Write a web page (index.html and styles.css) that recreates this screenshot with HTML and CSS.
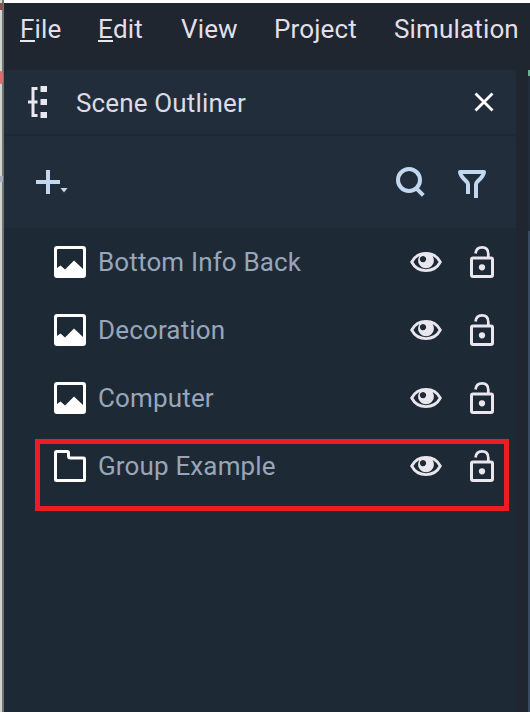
FILE: index.html
```html
<!DOCTYPE html>
<html lang="en">
<head>
<meta charset="utf-8">
<title>Scene Outliner</title>
<link rel="stylesheet" href="styles.css">
</head>
<body>
<svg class="symbols" aria-hidden="true">
  <symbol id="image" viewBox="0 0 32 32">
    <path fill="currentColor" fill-rule="evenodd" d="M3 0H29Q32 0 32 3V29Q32 32 29 32H3Q0 32 0 29V3Q0 0 3 0ZM4 3Q3 3 3 4V22L6.5 19.5L11 23.5L20 14.5L29 23V4Q29 3 28 3Z"/>
  </symbol>
  <symbol id="folder" viewBox="0 0 32 32">
    <path fill="none" stroke="currentColor" stroke-width="3" stroke-linejoin="round" d="M2.500 1.500H13Q14.500 1.500 14.500 3V6Q14.500 8 16.500 8H29.500Q30.500 8 30.500 9V29.500Q30.500 30.500 29.500 30.500H2.500Q1.500 30.500 1.500 29.500V2.500Q1.500 1.500 2.500 1.500Z"/>
  </symbol>
  <symbol id="eye" viewBox="0 0 32 20">
    <path fill="none" stroke="currentColor" stroke-width="2.800" d="M1.700 10C4.500 4.700 9.500 1.400 16 1.400S27.500 4.700 30.300 10C27.500 15.300 22.500 18.600 16 18.600S4.500 15.300 1.700 10Z"/>
    <path fill="currentColor" fill-rule="evenodd" d="M16 0.500A7.900 7.900 0 1 1 15.990 0.500ZM13 4A3.100 3.100 0 1 0 13.010 4Z"/>
  </symbol>
  <symbol id="lock" viewBox="0 0 24 32">
    <rect x="1.500" y="12" width="21" height="18.500" rx="1.500" fill="none" stroke="currentColor" stroke-width="3"/>
    <path fill="none" stroke="currentColor" stroke-width="2.700" d="M5.500 7.500C6 3.500 8.500 1.400 12 1.400C16 1.400 18.300 4 18.300 8V11"/>
    <circle cx="12" cy="21.300" r="3.100" fill="currentColor"/>
  </symbol>
</svg>
<div class="screen">
  <div class="backdrop"><i class="mark mark-top"></i><i class="mark mark-mid"></i><i class="mark mark-low"></i></div>
  <div class="window">
    <nav class="menu">
      <span class="file"><u>F</u>ile</span><span class="edit"><u>E</u>dit</span><span class="view">View</span><span class="project">Project</span><span class="simulation">Simulation</span>
    </nav>
    <div class="workspace">
      <section class="panel">
        <header class="titlebar">
          <svg class="tree" width="20" height="32" viewBox="0 0 20 32"><path fill="none" stroke="currentColor" stroke-width="3" d="M9.500 2.500H5V29.500H9.500M0 16H9.500"/><path fill="currentColor" d="M12.500 0H19V6H12.500ZM12.500 13H19V19H12.500ZM12.500 26H19V32H12.500Z"/></svg>
          <h1>Scene Outliner</h1>
          <svg class="close" width="20" height="20" viewBox="0 0 20 20"><path fill="none" stroke="currentColor" stroke-width="2.800" d="M1.500 1.500L18.500 18.500M18.500 1.500L1.500 18.500"/></svg>
        </header>
        <div class="toolbar">
          <svg class="add" width="32" height="24" viewBox="0 0 32 24"><path fill="none" stroke="currentColor" stroke-width="4" d="M12 0V24M0 12H24"/><path fill="currentColor" d="M24.500 18H31.500L28 22.500Z"/></svg>
          <svg class="search" width="30" height="30" viewBox="0 0 30 30"><circle cx="13" cy="13" r="11" fill="none" stroke="currentColor" stroke-width="4"/><path stroke="currentColor" stroke-width="4" d="M19.500 20.500L27.300 28.300"/></svg>
          <svg class="filter" width="28" height="28" viewBox="0 0 28 28"><path fill="none" stroke="currentColor" stroke-width="4" stroke-linejoin="round" d="M10 24V14.500Q10 13 8.500 11.500Q2 5.500 2 2H26Q26 5.500 19.500 11.500Q18 13 18 14.500V28"/></svg>
        </div>
        <ul class="list">
          <li><svg class="kind"><use href="#image"/></svg><span>Bottom Info Back</span><svg class="eye"><use href="#eye"/></svg><svg class="lock"><use href="#lock"/></svg></li>
          <li><svg class="kind"><use href="#image"/></svg><span>Decoration</span><svg class="eye"><use href="#eye"/></svg><svg class="lock"><use href="#lock"/></svg></li>
          <li><svg class="kind"><use href="#image"/></svg><span>Computer</span><svg class="eye"><use href="#eye"/></svg><svg class="lock"><use href="#lock"/></svg></li>
          <li class="marked"><svg class="kind"><use href="#folder"/></svg><span>Group Example</span><svg class="eye"><use href="#eye"/></svg><svg class="lock"><use href="#lock"/></svg></li>
        </ul>
      </section>
      <aside class="next-panel"></aside>
    </div>
  </div>
</div>
</body>
</html>
```

FILE: styles.css
```css
*, *::after { box-sizing: border-box; }
body { margin: 0; background: #fff; font-family: Roboto, sans-serif; font-size: 26px; line-height: 32px; letter-spacing: 0.15px; overflow: hidden; }
svg { display: block; flex: none; }
.symbols { position: absolute; width: 0; height: 0; }
.screen { display: flex; height: 712px; }
.backdrop { position: relative; flex: none; width: 4px; background: linear-gradient(90deg, #d1d5d2 2px, #727472 2px); }
.mark { position: absolute; left: 0; width: 3px; }
.mark-top { top: 3px; height: 7px; background: #865552; }
.mark-mid { top: 71px; height: 13px; background: #d5716f; border-radius: 0 3px 3px 0; }
.mark-low { top: 176px; height: 6px; background: #a4afbb; }
.window { flex: 1; display: flex; flex-direction: column; margin-top: 3px; background: #1f2630; min-width: 0; }
.menu { display: flex; height: 67px; padding: 10px 0 0 16px; color: #e2dfe9; white-space: nowrap; }
.menu span { flex: none; }
.menu u { display: inline-block; height: 29px; border-bottom: 2px solid #e9e7ef; text-decoration: none; }
.file { width: 78px; }
.edit { width: 83px; }
.view { width: 93px; }
.project { width: 120px; }
.workspace { flex: 1; display: flex; justify-content: space-between; }
.panel { width: 512px; background: #1e2936; }
.titlebar { display: flex; align-items: center; height: 64px; padding: 0 22px 0 24px; background: #222d3c; border-radius: 5px 5px 2px 2px; color: #eae7f0; }
h1 { flex: 1; margin: 0; padding: 2px 0 0 28px; font-size: 26px; font-weight: 400; color: #dddbe5; }
.close { color: #fff; }
.toolbar { display: flex; align-items: center; height: 92px; margin-top: 2px; padding: 0 30px 0 32px; background: #222d3c; border-radius: 4px 4px 0 0; color: #c2d8f0; }
.search { margin-left: auto; }
.filter { margin: 4px 0 0 32px; }
.list { margin: 0; padding: 0; list-style: none; color: #98a6b9; }
li { position: relative; display: flex; align-items: center; height: 68px; padding: 0 22px 0 50px; }
li span { flex: 1; margin-left: 12px; }
li svg { color: #e9e6ee; }
li .kind { width: 32px; height: 32px; color: #fff; }
.eye { width: 32px; height: 20px; margin-right: 28px; }
.lock { width: 24px; height: 32px; }
.marked::after { content: ""; position: absolute; top: 7px; left: 31px; width: 474px; height: 72px; border: 5px solid #ed1c24; }
.next-panel { width: 2px; background: linear-gradient(#68b394 6px, #222d3c 6px 161px, #384b62 161px); }
```
